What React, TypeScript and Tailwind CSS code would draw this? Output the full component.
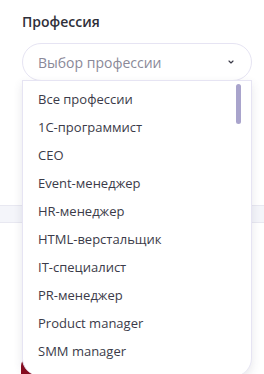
import { ChevronDown } from 'lucide-react'

const PROFESSIONS = [
  'Все профессии',
  '1С-программист',
  'CEO',
  'Event-менеджер',
  'HR-менеджер',
  'HTML-верстальщик',
  'IT-специалист',
  'PR-менеджер',
  'Product manager',
  'SMM manager',
]

export default function App() {
  return (
    <div
      className="relative h-[374px] w-[264px] overflow-hidden bg-white"
      style={{ fontFamily: '"Open Sans", "Noto Sans", sans-serif' }}
    >
      {/* page content behind the dropdown */}
      <div className="px-[22px] pt-[12px]">
        <div className="text-[14px] font-semibold leading-[20px] text-[#2f2f3a]">Профессия</div>
        <div className="relative mt-[11px] w-[230px]">
          <div className="flex h-[38px] items-center justify-between rounded-full border border-[#e6e4f3] bg-white pl-[15px] pr-[16px]">
            <span className="text-[14px] text-[#8a8998]">Выбор профессии</span>
            <ChevronDown size={8} strokeWidth={3.5} className="text-[#3a3a48]" />
          </div>

          {/* open list */}
          <div className="absolute left-0 top-[37px] z-10 h-[296px] w-[230px] overflow-hidden rounded-b-[18px] border-x border-t border-[#e6e4f3] bg-white shadow-[0_4px_10px_rgba(60,60,90,0.12)]">
            <div className="absolute right-[10px] top-[3px] h-[40px] w-[5px] rounded-full bg-[#a9a4cc]" />
            <ul className="pt-[5px]">
              {PROFESSIONS.map((p) => (
                <li key={p} className="flex h-[28px] items-center pl-[15px] text-[13px] text-[#3b3b49]">
                  {p}
                </li>
              ))}
            </ul>
          </div>
        </div>
      </div>

      <div className="mt-[124px] h-[18px] border-y border-[#e8e8f1] bg-[#f4f5fa]" />

      <div className="ml-[21px] mt-[135px] h-[30px] w-[60px] rounded-lg bg-[#8a0b1e]" />
    </div>
  )
}
